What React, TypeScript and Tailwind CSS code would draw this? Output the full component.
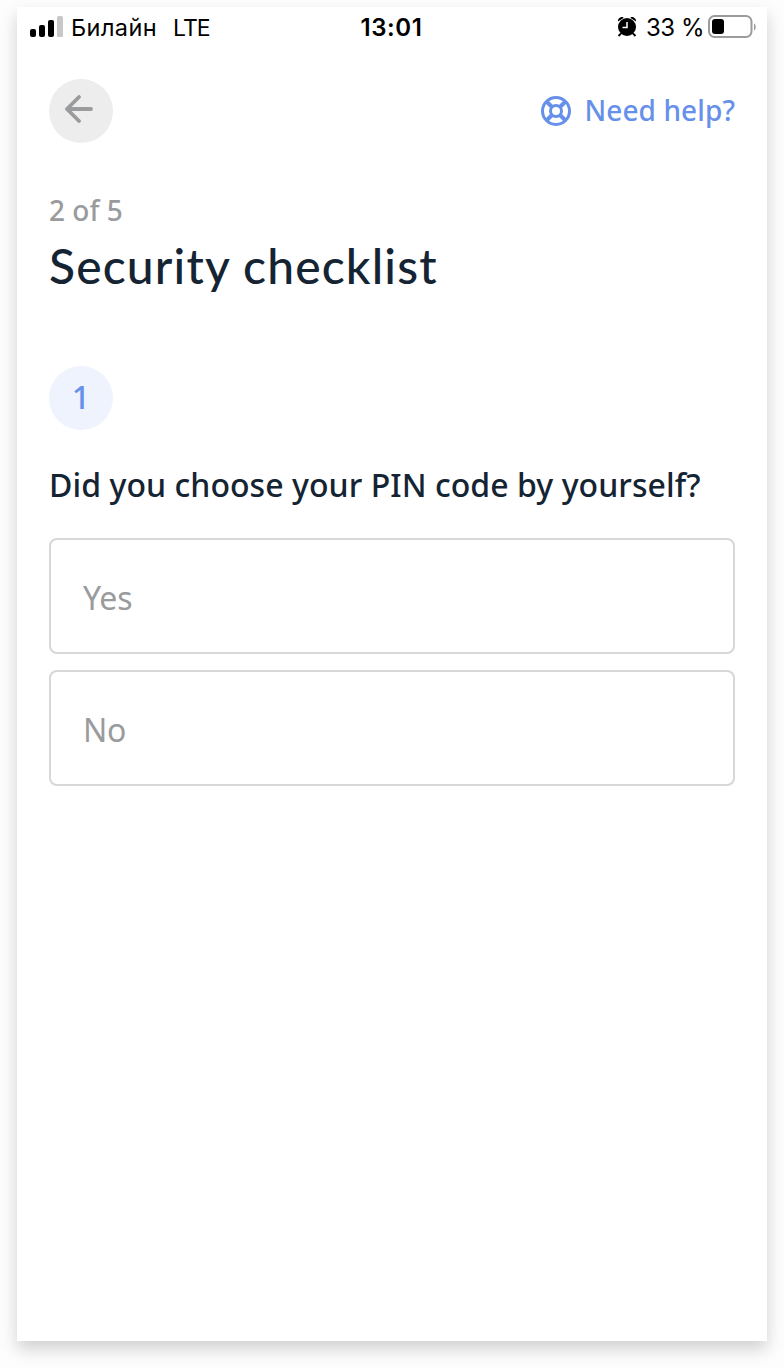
import { useState } from 'react';

const OPTIONS = ['Yes', 'No'];

function SignalIcon() {
  return (
    <svg width="34" height="22" viewBox="0 0 34 22" className="shrink-0">
      <rect x="0" y="13" width="6" height="8" rx="2" fill="#000" />
      <rect x="9" y="9" width="6" height="12" rx="2" fill="#000" />
      <rect x="18" y="4" width="6" height="17" rx="2" fill="#000" />
      <rect x="27" y="0" width="6" height="21" rx="1.5" fill="#c6c8ca" />
    </svg>
  );
}

function AlarmIcon() {
  return (
    <svg width="20" height="22" viewBox="0 0 20 22" className="shrink-0">
      <path d="M1 5.500C.5 3.500 2.500 1 5 1c1.200 0 1.500.5 1.500 1zM19 5.500c.5-2-1.500-4.500-4-4.500-1.200 0-1.500.5-1.500 1z" fill="#000" />
      <path d="M4 17.500 1.500 20M16 17.500l2.500 2.500" stroke="#000" strokeWidth="1.8" />
      <circle cx="10" cy="11" r="9" fill="#000" />
      <path d="M10 6V11.500H5.500" fill="none" stroke="#fff" strokeWidth="1.5" />
    </svg>
  );
}

function BatteryIcon() {
  return (
    <svg width="48" height="24" viewBox="0 0 48 24" className="shrink-0">
      <rect x="1" y="1" width="42.500" height="21" rx="5.500" fill="none" stroke="#999b9d" strokeWidth="2" />
      <rect x="4" y="4" width="12" height="15" rx="3" fill="#000" />
      <path d="M46 8.500c2.300 1 2.300 6 0 7z" fill="#999b9d" />
    </svg>
  );
}

function StatusBar() {
  return (
    <div className="grid h-10 grid-cols-3 items-center pl-[13px] pr-[11px] font-['Inter',sans-serif] text-2xl text-black">
      <div className="flex items-center whitespace-nowrap">
        <SignalIcon />
        <span className="ml-[7px] pt-0.5 text-[23.500px] tracking-[0.4px]">Билайн</span>
        <span className="ml-4 pt-0.5 text-[23px] tracking-[-0.9px]">LTE</span>
      </div>
      <div className="pr-[3px] pt-0.5 text-center font-semibold tracking-[0.6px]">13:01</div>
      <div className="flex items-center justify-end whitespace-nowrap">
        <AlarmIcon />
        <span className="ml-[9px] mr-1 pt-0.5 tracking-[-0.5px]">33 %</span>
        <BatteryIcon />
      </div>
    </div>
  );
}

function LifebuoyIcon() {
  return (
    <svg width="32" height="32" viewBox="0 0 32 32" fill="none" stroke="#6690ea" strokeWidth="3">
      <circle cx="16" cy="16" r="13.500" />
      <circle cx="16" cy="16" r="5.500" />
      <path d="M6.500 6.500l5.500 5.500M20 20l5.500 5.500M25.500 6.500L20 12M12 20l-5.500 5.500" strokeWidth="4" />
    </svg>
  );
}

export default function App() {
  const [answer, setAnswer] = useState<string | null>(null);

  return (
    <div className="h-[1368px] overflow-hidden bg-[#fdfdfd] px-[17px] pt-[7px] font-['Noto_Sans',sans-serif]">
      <div className="h-[1334px] bg-white shadow-[0_8px_16px_rgba(0,0,0,0.18)]">
        <StatusBar />

        <main className="px-8 pt-8">
          {/* Top navigation */}
          <div className="flex h-16 items-center justify-between">
            <button aria-label="Back" className="flex size-16 items-center justify-center rounded-full bg-[#ededed]">
              <svg width="32" height="32" viewBox="0 0 32 32" fill="none" stroke="#999b9d" strokeWidth="3.800" strokeLinecap="round" strokeLinejoin="round">
                <path d="M26 14H2M14 2L2 14l12 12" />
              </svg>
            </button>
            <button className="flex items-center gap-3 whitespace-nowrap text-[28px] font-medium leading-8 tracking-[0.1px] text-[#6690ea]">
              <LifebuoyIcon />
              <span className="pb-0.5">Need help?</span>
            </button>
          </div>

          <p className="mt-[47px] text-[28px] font-medium leading-10 text-[#999b9d]">2 of 5</p>
          <h1 className="mt-2 whitespace-nowrap font-['Lato',sans-serif] text-5xl font-medium leading-14 tracking-[1.15px] text-[#152433]">
            Security checklist
          </h1>

          {/* Current question */}
          <div className="mt-[72px] flex size-16 items-center justify-center rounded-full bg-[#eef3fd] pb-0.5 text-[32px] font-medium text-[#6690ea]">
            1
          </div>
          <h2 className="mt-[31px] whitespace-nowrap text-[32px] font-medium leading-12 tracking-[0.06px] text-[#152433]">
            Did you choose your PIN code by yourself?
          </h2>
          <div className="mt-[29px] flex flex-col gap-4">
            {OPTIONS.map(option => (
              <button
                key={option}
                aria-pressed={answer === option}
                onClick={() => setAnswer(option)}
                className="flex h-[116px] items-center rounded-lg border-2 border-[#d6d7d9] px-8 pt-[3px] text-left text-[32px] tracking-[-0.2px] text-[#999b9d]"
              >
                {option}
              </button>
            ))}
          </div>
        </main>
      </div>
    </div>
  );
}
